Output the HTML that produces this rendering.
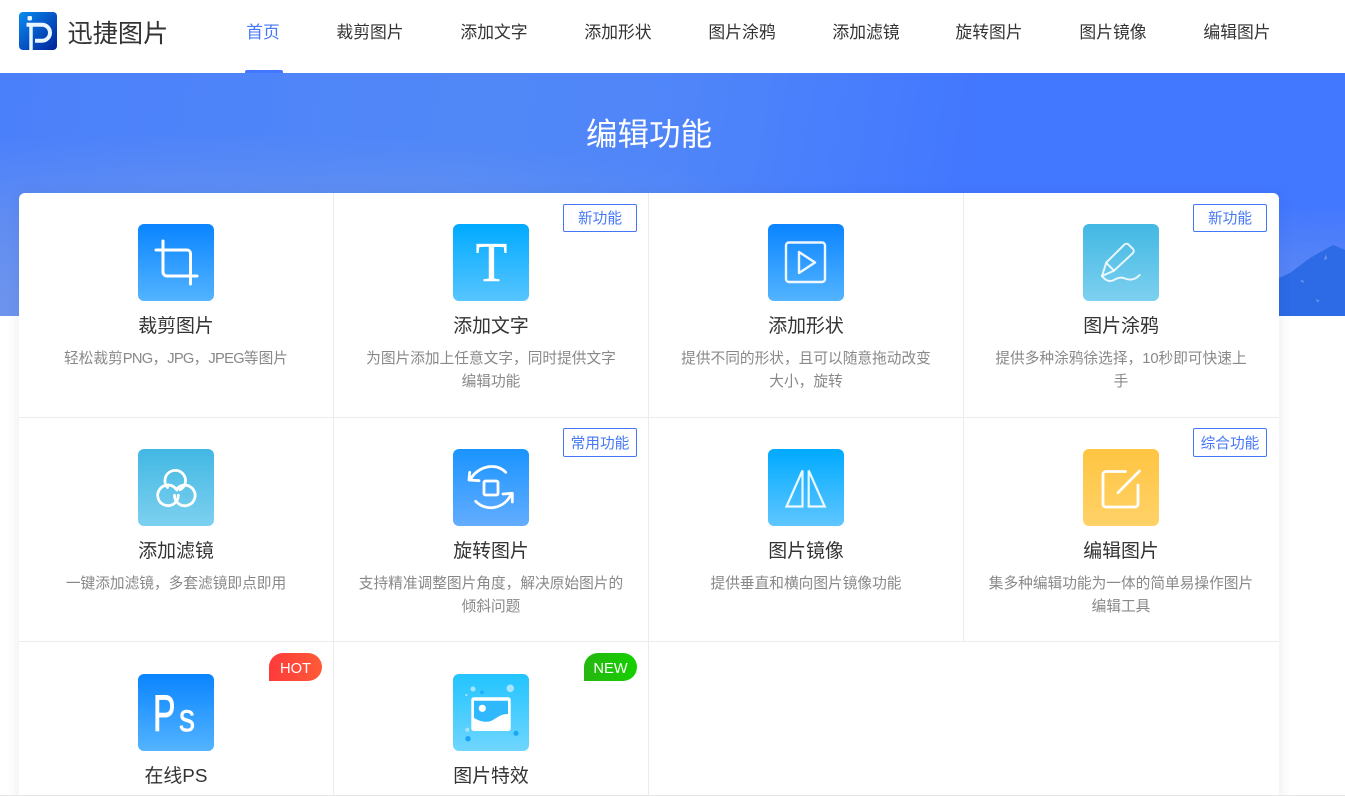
<!DOCTYPE html>
<html lang="zh-CN">
<head>
<meta charset="utf-8">
<title>迅捷图片</title>
<style>
*{box-sizing:border-box;margin:0;padding:0}
html,body{width:1345px;height:796px;overflow:hidden;background:#fff}
body{position:relative;font-family:"Liberation Sans","Noto Sans CJK SC",sans-serif;color:#333}
.logo{position:absolute;left:19px;top:12px;width:38px;height:38px}
.brand{position:absolute;left:67.500px;top:14.500px;font-size:25.200px;line-height:38px;color:#333;white-space:nowrap}
.nav{position:absolute;top:20.500px;font-size:16.800px;line-height:24px;color:#333;width:120px;text-align:center;white-space:nowrap}
.nav.on{color:#4477fa}
.ul{position:absolute;left:245px;top:70px;width:38px;height:3px;background:#4477ff;border-radius:2px 2px 0 0}
.banner{position:absolute;left:0;top:73px;width:1345px;height:243px;overflow:hidden;background:linear-gradient(100deg,#4b80fb 0%,#5188f7 35%,#4f85f9 50%,#4277ff 72%,#4277ff 100%)}
.banner svg{position:absolute;left:0;top:0}
.h{position:absolute;left:0;top:39px;width:1298px;text-align:center;font-size:31.500px;line-height:44px;color:#fff}
.card{position:absolute;left:19px;top:193px;width:1260px;height:640px;background:#fff;border-radius:6px;box-shadow:0 2px 14px rgba(40,60,110,.10)}
.c{position:absolute;width:315px;height:225px;border-right:1px solid #ececec;border-bottom:1px solid #ececec}
.c.l{border-right:none}
.c.r2{height:224px}
.c.r3{height:191px;border-bottom:none}
.i{position:absolute;left:119px;top:31px;width:76px;height:77px;border-radius:6px}
.i svg{display:block;width:76px;height:77px}
.t{position:absolute;left:0;top:121px;width:314px;text-align:center;font-size:18.900px;line-height:26px;color:#333}
.r3 .i{top:32px}
.r3 .t{top:122px}
.d{position:absolute;left:0;top:154.500px;width:314px;text-align:center;font-size:14.700px;line-height:23px;color:#888;white-space:nowrap}
.d span{letter-spacing:-.7px}
.tag{position:absolute;right:11px;top:11px;width:74px;height:28px;border:1px solid #4477f5;border-radius:2px;background:#fff;color:#4477f5;font-size:14.700px;line-height:29px;text-align:center;white-space:nowrap}
.r2 .tag{top:10px;height:29px;line-height:30px}
.l .tag{right:12px}
.pill{position:absolute;top:11px;right:11px;height:28px;width:53px;border-radius:14px 14px 14px 0;color:#fff;font-size:14.700px;line-height:32px;text-align:center}
.foot{position:absolute;left:0;top:795px;width:1345px;height:1px;background:#e6e6e6}
</style>
</head>
<body>
<svg class="logo" viewBox="0 0 38 38">
<defs><linearGradient id="lg" x1="0" y1="0" x2="1" y2="1"><stop offset="0" stop-color="#0a8cf0"/><stop offset="1" stop-color="#00209a"/></linearGradient></defs>
<rect width="38" height="38" rx="4" fill="url(#lg)"/>
<rect x="8.500" y="4" width="4.500" height="4.500" rx="1.200" fill="#e8f4ff"/>
<path d="M12 12V38" stroke="#eaf5ff" stroke-width="3.500" fill="none"/>
<path d="M7.500 12.700H23a8 8 0 0 1 0 16H16" stroke="#eaf5ff" stroke-width="4" fill="none"/>
</svg>
<div class="brand">迅捷图片</div>
<div class="nav on" style="left:203px">首页</div>
<div class="nav" style="left:310px">裁剪图片</div>
<div class="nav" style="left:434px">添加文字</div>
<div class="nav" style="left:558px">添加形状</div>
<div class="nav" style="left:682px">图片涂鸦</div>
<div class="nav" style="left:806px">添加滤镜</div>
<div class="nav" style="left:929px">旋转图片</div>
<div class="nav" style="left:1053px">图片镜像</div>
<div class="nav" style="left:1177px">编辑图片</div>
<div class="ul"></div>

<div class="banner">
<svg width="1345" height="243" viewBox="0 0 1345 243">
<defs>
<radialGradient id="hz"><stop offset="0" stop-color="#7f9fe6" stop-opacity=".8"/><stop offset=".6" stop-color="#7f9fe6" stop-opacity=".4"/><stop offset="1" stop-color="#7f9fe6" stop-opacity="0"/></radialGradient>
</defs>
<ellipse cx="200" cy="250" rx="800" ry="190" fill="url(#hz)"/>
<ellipse cx="1345" cy="260" rx="400" ry="130" fill="url(#hz)" opacity=".7"/>
<path d="M1260 243L1279 205 1290 200 1310 185 1333 172 1345 177V243z" fill="#2c6ae6"/>
<path d="M1324 187l2-6 1 5zM1300 208l3-1 1 3zM1316 226l4 2-3 1z" fill="#6d96ee"/>
</svg>
<div class="h">编辑功能</div>
</div>

<div class="card">
<div class="c" style="left:0;top:0">
<div class="i" style="background:linear-gradient(#0a84ff,#53b4ff)"><svg viewBox="0 0 76 77" fill="none" stroke="#fff" stroke-width="3" stroke-linecap="round"><path d="M18 26H49a3.500 3.500 0 0 1 3.500 3.500V60"/><path d="M25 17V48a4 4 0 0 0 4 4H59"/></svg></div>
<div class="t">裁剪图片</div><div class="d">轻松裁剪<span>PNG</span>，<span>JPG</span>，<span>JPEG</span>等图片</div></div>

<div class="c" style="left:315px;top:0">
<div class="tag">新功能</div>
<div class="i" style="background:linear-gradient(#00aaff,#57c5ff)"><svg viewBox="0 0 76 77"><text transform="translate(38.500,57) scale(.92,1)" text-anchor="middle" font-family="Liberation Serif,serif" font-size="56" fill="#fff" stroke="#fff" stroke-width=".5">T</text></svg></div>
<div class="t">添加文字</div><div class="d">为图片添加上任意文字，同时提供文字<br>编辑功能</div></div>

<div class="c" style="left:630px;top:0">
<div class="i" style="background:linear-gradient(#0a84ff,#53b4ff)"><svg viewBox="0 0 76 77" fill="none" stroke="#fff" stroke-opacity=".92" stroke-width="2.400" stroke-linejoin="round"><rect x="18" y="18.500" width="39" height="39.500" rx="3"/><path d="M31 28V49L47 38.500z"/></svg></div>
<div class="t">添加形状</div><div class="d">提供不同的形状，且可以随意拖动改变<br>大小，旋转</div></div>

<div class="c l" style="left:945px;top:0">
<div class="tag">新功能</div>
<div class="i" style="background:linear-gradient(#42b8e3,#7dd0ef)"><svg viewBox="0 0 76 77" fill="none" stroke="#fff" stroke-opacity=".85" stroke-width="2" stroke-linecap="round" stroke-linejoin="round"><path d="M23.300 38.500L41.500 20.500a3 3 0 0 1 4 0L50 25a3 3 0 0 1 0 4L31 46.700 19 52z"/><path d="M23.300 38.800L31 46.700"/><path d="M19 52C22 56 26 58 30 56.500 34 54 38 52.500 42 54.500 47 56.500 52 56 56.700 51"/></svg></div>
<div class="t">图片涂鸦</div><div class="d">提供多种涂鸦徐选择，10秒即可快速上<br>手</div></div>

<div class="c r2" style="left:0;top:225px">
<div class="i" style="background:linear-gradient(#42b8e3,#7dd0ef)"><svg viewBox="0 0 76 77" fill="none" stroke="#fff" stroke-width="2.800" stroke-linecap="round"><path d="M29.500 38.500A10.300 10.300 0 1 1 42 40.800"/><path d="M38.800 41A10.300 10.300 0 1 0 40.300 46.300"/><path d="M38.800 40A10.300 10.300 0 1 1 36.500 46.300"/></svg></div>
<div class="t">添加滤镜</div><div class="d">一键添加滤镜，多套滤镜即点即用</div></div>

<div class="c r2" style="left:315px;top:225px">
<div class="tag">常用功能</div>
<div class="i" style="background:linear-gradient(#1a94ff,#63adff)"><svg viewBox="0 0 76 77" fill="none" stroke="#fff" stroke-width="2.800" stroke-linecap="round" stroke-linejoin="round"><rect x="31" y="32" width="14" height="14" rx="1.500"/><path d="M18.300 29C24 19 42 12 52.700 23.300"/><path d="M16.700 23.300L16 31 26 31.700"/><path d="M22.700 52.300C33 63 51 60 58 45.500"/><path d="M50 45L59.300 44.300V53"/></svg></div>
<div class="t">旋转图片</div><div class="d">支持精准调整图片角度，解决原始图片的<br>倾斜问题</div></div>

<div class="c r2" style="left:630px;top:225px">
<div class="i" style="background:linear-gradient(#00aaff,#5fc6ff)"><svg viewBox="0 0 76 77" fill="none" stroke="#fff" stroke-opacity=".9" stroke-width="2.200"><path d="M34.500 21.500V57.500H18.500z"/><path d="M40.700 21.500V57.500H56.700z"/></svg></div>
<div class="t">图片镜像</div><div class="d">提供垂直和横向图片镜像功能</div></div>

<div class="c l r2" style="left:945px;top:225px">
<div class="tag">综合功能</div>
<div class="i" style="background:linear-gradient(#ffc542,#ffd268)"><svg viewBox="0 0 76 77" fill="none" stroke="#fff" stroke-width="2.800" stroke-linecap="round"><path d="M42.500 22.500H23a3 3 0 0 0-3 3V55a3 3 0 0 0 3 3H52a3 3 0 0 0 3-3V36"/><path d="M35 43.700L56.500 22"/></svg></div>
<div class="t">编辑图片</div><div class="d">集多种编辑功能为一体的简单易操作图片<br>编辑工具</div></div>

<div class="c r3" style="left:0;top:449px">
<div class="pill" style="background:linear-gradient(90deg,#ff3a3a,#ff5a38)">HOT</div>
<div class="i" style="background:linear-gradient(#0a84ff,#53b4ff)"><svg viewBox="0 0 76 77"><text transform="translate(15,56.700) scale(.66,1)" font-family="Liberation Sans,sans-serif" font-size="51" fill="#fff" stroke="#fff" stroke-width="1">P</text><text transform="translate(41,57) scale(.82,1)" font-family="Liberation Sans,sans-serif" font-size="39" fill="#fff" stroke="#fff" stroke-width=".6">s</text></svg></div>
<div class="t">在线PS</div></div>

<div class="c r3" style="left:315px;top:449px">
<div class="pill" style="background:linear-gradient(90deg,#26b70f,#16cf00)">NEW</div>
<div class="i" style="background:linear-gradient(#22c4ff,#6fd6ff)"><svg viewBox="0 0 76 77"><circle cx="20" cy="15" r="2.500" fill="#a5e5ff"/><circle cx="57.300" cy="14.300" r="3.800" fill="#a5e5ff"/><circle cx="29" cy="18.300" r="1.800" fill="#20a8ff"/><circle cx="13.300" cy="21" r="1" fill="#bdeaff"/><circle cx="14.300" cy="55.700" r="2" fill="#a5e5ff"/><circle cx="15" cy="64.700" r="2.700" fill="#18a5f8"/><circle cx="63" cy="59.300" r="2.500" fill="#18a5f8"/><rect x="18.300" y="23.300" width="39.400" height="33.700" rx="2.500" fill="#fff"/><path d="M21 26.700H55V40C47 40 44 44 38 47 32 49 26 47 21 43.700z" fill="#2fb8fb"/><circle cx="29.300" cy="34.300" r="3.600" fill="#fff"/></svg></div>
<div class="t">图片特效</div></div>
</div>
<div class="foot"></div>
</body>
</html>
